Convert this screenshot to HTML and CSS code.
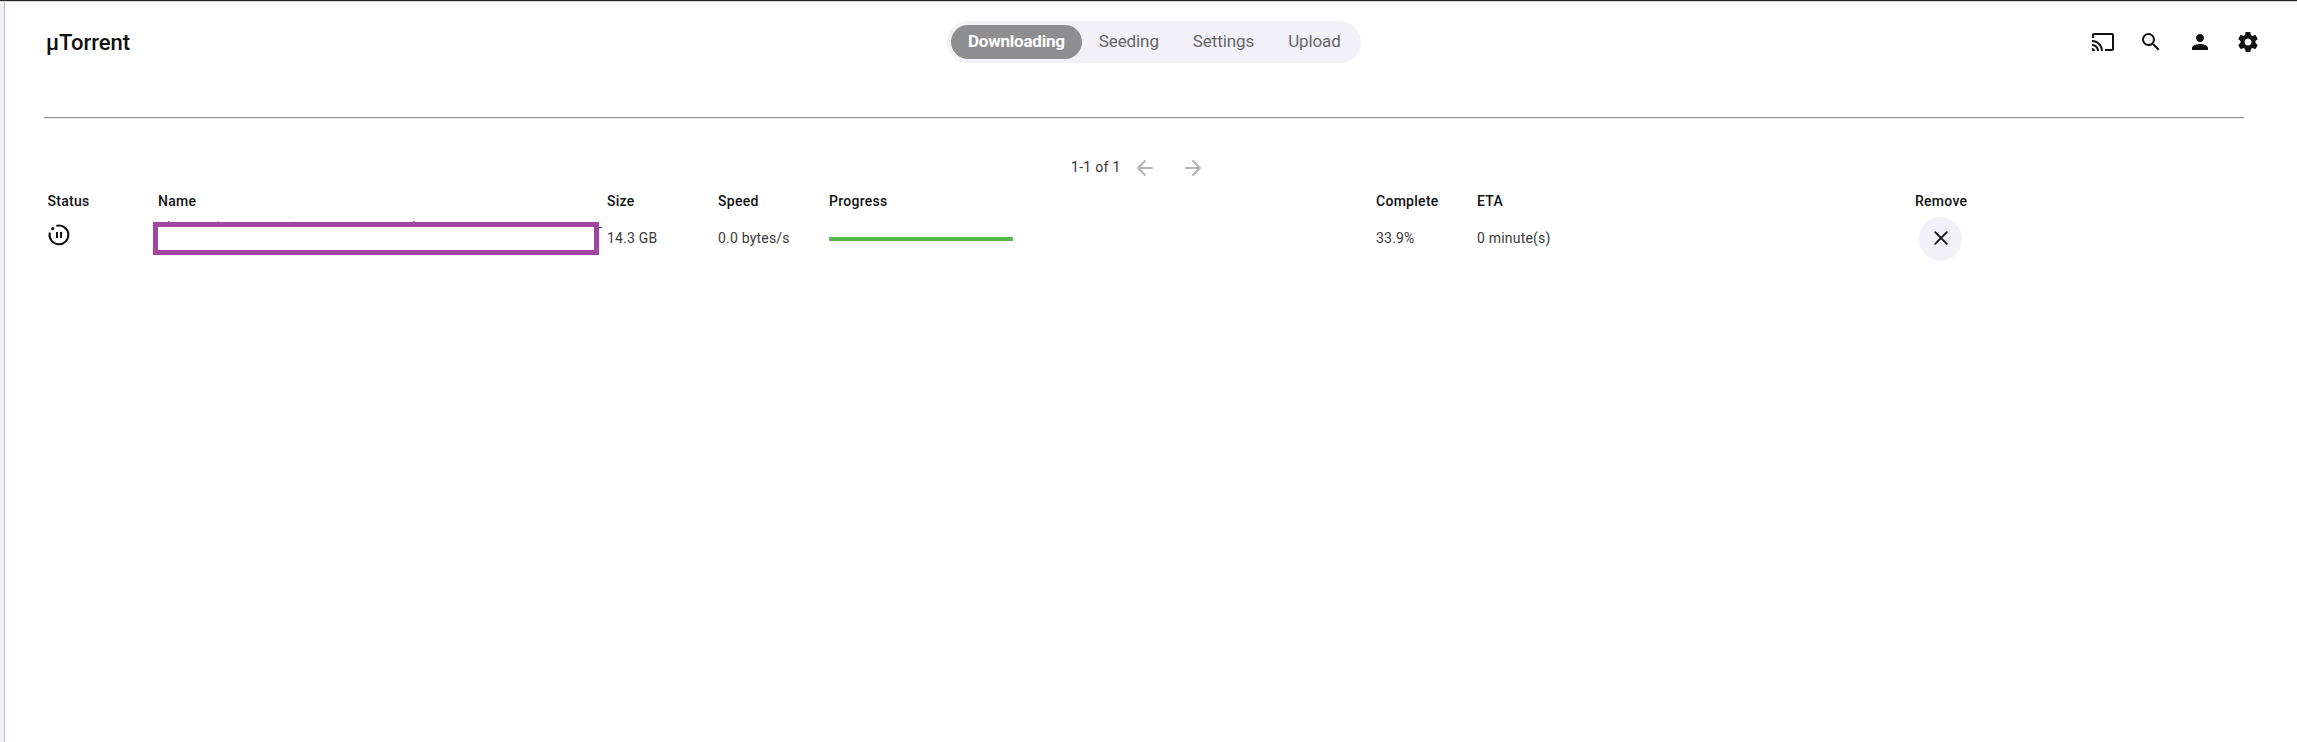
FILE: index.html
```html
<!DOCTYPE html>
<html lang="en">
<head>
<meta charset="utf-8">
<title>µTorrent</title>
<link rel="stylesheet" href="styles.css">
</head>
<body>
<div class="rail"></div>
<div class="page">
  <header class="header">
    <h1 class="brand">µTorrent</h1>
    <nav class="tabs">
      <a class="tab tab-active">Downloading</a>
      <a class="tab">Seeding</a>
      <a class="tab">Settings</a>
      <a class="tab">Upload</a>
    </nav>
    <div class="actions">
      <svg class="icon" viewBox="0 0 24 24"><path d="M21 3H3c-1.100 0-2 .9-2 2v3h2V5h18v14h-7v2h7c1.100 0 2-.9 2-2V5c0-1.100-.9-2-2-2zM1 18v3h3c0-1.660-1.340-3-3-3zm0-4v2c2.760 0 5 2.240 5 5h2c0-3.870-3.130-7-7-7zm0-4v2c4.970 0 9 4.030 9 9h2c0-6.080-4.930-11-11-11z"/></svg>
      <svg class="icon" viewBox="0 0 24 24"><path d="M15.500 14h-.79l-.28-.27A6.471 6.471 0 0 0 16 9.500 6.500 6.500 0 1 0 9.500 16c1.610 0 3.090-.59 4.230-1.570l.27.28v.79l5 4.990L20.490 19l-4.990-5zm-6 0C7.010 14 5 11.990 5 9.500S7.010 5 9.500 5 14 7.010 14 9.500 11.990 14 9.500 14z"/></svg>
      <svg class="icon" viewBox="0 0 24 24"><path d="M12 12c2.210 0 4-1.790 4-4s-1.790-4-4-4-4 1.790-4 4 1.790 4 4 4zm0 2c-2.670 0-8 1.340-8 4v2h16v-2c0-2.660-5.330-4-8-4z"/></svg>
      <svg class="icon" viewBox="0 0 24 24"><path d="M19.430 12.980c.04-.32.07-.64.07-.98s-.03-.66-.07-.98l2.110-1.650c.19-.15.24-.42.12-.64l-2-3.460c-.12-.22-.39-.3-.61-.22l-2.490 1c-.52-.4-1.080-.73-1.690-.98l-.38-2.650A.488.488 0 0 0 14 2h-4c-.25 0-.46.18-.49.42l-.38 2.650c-.61.25-1.170.59-1.690.98l-2.490-1c-.23-.09-.49 0-.61.22l-2 3.460c-.13.22-.07.49.12.64l2.110 1.650c-.04.32-.07.65-.07.98s.03.66.07.98l-2.110 1.650c-.19.15-.24.42-.12.64l2 3.460c.12.22.39.3.61.22l2.490-1c.52.4 1.080.73 1.690.98l.38 2.650c.03.24.24.42.49.42h4c.25 0 .46-.18.49-.42l.38-2.650c.61-.25 1.170-.59 1.690-.98l2.490 1c.23.09.49 0 .61-.22l2-3.460c.12-.22.07-.49-.12-.64l-2.110-1.650zM12 15.500c-1.930 0-3.500-1.570-3.500-3.500s1.570-3.500 3.500-3.500 3.500 1.570 3.500 3.500-1.570 3.500-3.500 3.500z"/></svg>
    </div>
  </header>
  <hr class="rule">
  <div class="pager">
    <span class="range">1-1 of 1</span>
    <svg class="arrow" viewBox="0 0 24 24"><path d="M19 12H5M12 5l-7 7 7 7"/></svg>
    <svg class="arrow" viewBox="0 0 24 24"><path d="M5 12h14M12 5l7 7-7 7"/></svg>
  </div>
  <div class="grid head">
    <span class="first">Status</span><span>Name</span><span>Size</span><span>Speed</span><span>Progress</span><span>Complete</span><span>ETA</span><span>Remove</span>
  </div>
  <div class="grid row">
    <svg class="status" viewBox="0 0 24 24"><path class="ring" d="M9.300 2.900A9.400 9.400 0 1 1 2.900 9.400"/><circle cx="5.700" cy="5.600" r="1.600"/><path d="M9 9h2v6H9zM13 9h2v6h-2z"/></svg>
    <div class="name"></div>
    <span class="cell">14.3 GB</span>
    <span class="cell">0.0 bytes/s</span>
    <div class="track"><div class="bar" style="width:33.9%"></div></div>
    <span class="cell">33.9%</span>
    <span class="cell">0 minute(s)</span>
    <button class="remove" aria-label="Remove"><svg viewBox="0 0 24 24"><path d="M5 5l14 14M19 5L5 19"/></svg></button>
  </div>
</div>
</body>
</html>
```
FILE: styles.css
```css
* { box-sizing: border-box; }
body {
  margin: 0;
  height: 742px;
  display: flex;
  overflow: hidden;
  border-top: 1px solid #29272b;
  box-shadow: inset 0 1px #d5d4d8;
  background: #fff;
  color: #111;
  font: 14px/20px Roboto, sans-serif;
}
.rail {
  width: 5px;
  margin-top: 1px;
  background: #f1f0f6;
  border-right: 1px solid #b9b8bf;
}
.page { flex: 1; padding-left: 39px; }
.header {
  display: grid;
  grid-template-columns: 903px 414px 1fr;
  align-items: center;
  height: 82px;
}
.brand { margin: 0 0 0 2px; padding-top: 2px; font-size: 22px; font-weight: 500; }
.tabs {
  display: flex;
  height: 42px;
  padding: 4px;
  border-radius: 21px;
  background: #f2f1f7;
}
.tab {
  padding: 0 17px;
  border-radius: 17px;
  color: #666;
  font-size: 17px;
  line-height: 33px;
  letter-spacing: -.1px;
}
.tab-active { background: #8e8e90; color: #fff; font-weight: 700; letter-spacing: -.22px; }
.actions { display: flex; justify-content: flex-end; gap: 24.500px; padding: 0 37px 0 0; }
.icon { width: 24px; height: 24px; fill: #111; }
.rule {
  width: 2200px;
  height: 2px;
  margin: 34px 0 0;
  border: 0;
  overflow: hidden;
  background: linear-gradient(#929292 50%, #eee 50%);
}
.pager { display: flex; align-items: center; margin: 38px 0 0 1027px; height: 20px; }
.range { width: 62px; letter-spacing: .3px; color: #333; }
.arrow { width: 24px; height: 24px; margin: 2px 24px 0 0; stroke: #b5b5b5; stroke-width: 2; stroke-linecap: round; stroke-linejoin: round; fill: none; }
.grid {
  display: grid;
  grid-template-columns: 111px 449px 111px 111px 547px 101px 438px 100px;
  padding-left: 3px;
  letter-spacing: .28px;
}
.head { margin-top: 14px; font-weight: 500; }
.first { padding-left: .5px; }
.row { height: 46px; margin-top: 5px; align-items: center; color: #3a3a3a; }
.cell { padding-bottom: 2px; letter-spacing: .2px; }
.status { width: 24px; height: 24px; margin-bottom: 8px; fill: #111; }
.ring { fill: none; stroke: #111; stroke-width: 2; }
.name {
  position: relative;
  width: 446px;
  height: 33px;
  margin: 0 0 1px -5px;
  border: 5px solid #a045a0;
}
/* Traces of the covered name along the top and right edges */
.name::before {
  content: "";
  position: absolute;
  left: -5px;
  top: -6px;
  width: 446px;
  height: 1px;
  background:
    linear-gradient(#555, #555) 15px 0 / 1px 1px no-repeat,
    linear-gradient(#ddd, #ddd) 64px 0 / 2px 1px no-repeat,
    linear-gradient(#ccc, #ccc) 140px 0 / 1px 1px no-repeat,
    linear-gradient(#888, #888) 260px 0 / 2px 1px no-repeat;
}
.name::after {
  content: "";
  position: absolute;
  right: -8px;
  top: 0;
  width: 3px;
  height: 1px;
  background: #333;
}
.track { width: 543px; height: 4px; }
.bar { height: 4px; background: #53b64c; }
.remove {
  display: grid;
  place-items: center;
  width: 43px;
  height: 44px;
  margin-left: 4px;
  padding: 0 0 2px;
  border: 0;
  border-radius: 50%;
  background: #f2f1f7;
}
.remove svg { width: 20px; height: 20px; stroke: #111; stroke-width: 2.200; stroke-linecap: round; }
```
